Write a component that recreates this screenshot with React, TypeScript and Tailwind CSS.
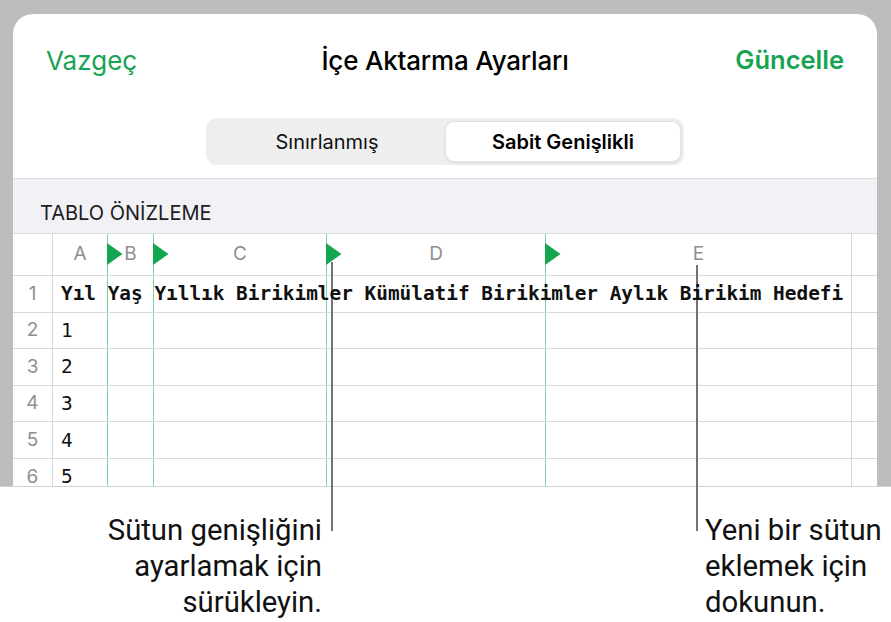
import React from 'react'

// ── Data ───────────────────────────────────────────────────────────────────────

const columns = [
  { key: 'A', w: 'w-[54px]' },
  { key: 'B', w: 'w-[46px]' },
  { key: 'C', w: 'w-[173px]' },
  { key: 'D', w: 'w-[219px]' },
  { key: 'E', w: 'w-[307px]' },
]

const bodyRows = ['1', '2', '3', '4', '5']

const headerText = 'Yıl Yaş Yıllık Birikimler Kümülatif Birikimler Aylık Birikim Hedefi'

// ── Bits ───────────────────────────────────────────────────────────────────────

function Marker() {
  return (
    <svg width="16" height="22" viewBox="0 0 16 22" className="absolute left-[-1px] top-[9px]">
      <path d="M0 0L15.5 11L0 22Z" fill="#14a64f" />
    </svg>
  )
}

function RowCells({ children, first }: { children?: React.ReactNode; first?: boolean }) {
  return (
    <>
      <div className={`w-[54px] relative z-10 flex items-center pl-[8px] font-['DejaVu_Sans_Mono',monospace] text-[19.4px] text-[#111] whitespace-nowrap ${first ? 'font-bold' : ''}`}>
        {children}
      </div>
      <div className="w-[46px] border-l border-l-[#7fd4a3]" />
      <div className="w-[173px] border-l border-l-[#7fd4a3]" />
      <div className="w-[219px] border-l border-l-[#7fd4a3]" />
      <div className="w-[307px] border-l border-l-[#7fd4a3] border-r border-r-[#d6d6d6]" />
    </>
  )
}

// ── Component ──────────────────────────────────────────────────────────────────

export default function App() {
  return (
    <div className="w-[891px] h-[622px] bg-white relative overflow-hidden font-['Inter',sans-serif]">
      {/* ── Screenshot frame ── */}
      <div className="h-[487px] bg-[#bcbebb] pt-[14px] pl-[13px] pr-[14px] border-b border-[#d0d0d0]">
        <div className="h-full bg-white rounded-t-[20px] overflow-hidden flex flex-col">
          {/* Header */}
          <div className="h-[92px] shrink-0 flex items-center px-[33px]">
            <div className="flex-1 text-[26px] text-[#17a452]">Vazgeç</div>
            <div className="text-[26px] font-medium text-black tracking-[-0.2px]">İçe Aktarma Ayarları</div>
            <div className="flex-1 text-right text-[25.5px] font-semibold text-[#17a452]">Güncelle</div>
          </div>

          {/* Segmented control */}
          <div className="mt-[12px] mx-auto w-[478px] h-[47px] shrink-0 rounded-[11px] bg-[#eeeeef] p-[3px] grid grid-cols-2">
            <div className="flex items-center justify-center text-[20px] text-[#111]">Sınırlanmış</div>
            <div className="flex items-center justify-center rounded-[9px] bg-white border border-[#e2e2e4] shadow-[0_1px_3px_rgba(0,0,0,0.08)] text-[20px] font-semibold text-black">
              Sabit Genişlikli
            </div>
          </div>

          {/* Section header */}
          <div className="mt-[13px] h-[56px] shrink-0 border-t border-b border-[#dcdce0] bg-[#f1f1f6] pl-[27px] pt-[19px] text-[20px] text-[#1c1c1e]">
            TABLO ÖNİZLEME
          </div>

          {/* Table */}
          <div className="flex flex-col">
            <div className="h-[42px] flex border-b border-[#d9d9d9]">
              <div className="w-[40px] border-r border-[#d9d9d9]" />
              {columns.map((c, i) => (
                <div
                  key={c.key}
                  className={`${c.w} relative flex items-center justify-center text-[19px] text-[#8e8e93] ${i > 0 ? 'border-l border-l-[#7fd4a3]' : ''} ${i === columns.length - 1 ? 'border-r border-r-[#d6d6d6]' : ''}`}
                >
                  {i > 0 && <Marker />}
                  {c.key}
                </div>
              ))}
            </div>

            <div className="h-[36.6px] flex border-b border-[#d9d9d9]">
              <div className="w-[40px] border-r border-[#d9d9d9] flex items-center justify-center text-[19px] text-[#8e8e93]">1</div>
              <RowCells first>{headerText}</RowCells>
            </div>

            {bodyRows.map((v, i) => (
              <div key={v} className="h-[36.6px] shrink-0 flex border-b border-[#d9d9d9]">
                <div className="w-[40px] border-r border-[#d9d9d9] flex items-center justify-center text-[19px] text-[#8e8e93]">{i + 2}</div>
                <RowCells>{v}</RowCells>
              </div>
            ))}
          </div>
        </div>
      </div>

      {/* ── Callout leader lines ── */}
      <div className="absolute left-[331px] top-[262px] w-[2px] h-[269px] bg-[#747474]" />
      <div className="absolute left-[696px] top-[265px] w-[2px] h-[266px] bg-[#747474]" />

      {/* ── Callout texts ── */}
      <div className="flex pt-[25px] font-['Roboto',sans-serif] text-[29.3px] leading-[36px] text-[#111]">
        <div className="w-[322px] text-right">
          Sütun genişliğini<br />ayarlamak için<br />sürükleyin.
        </div>
        <div className="ml-[383px]">
          Yeni bir sütun<br />eklemek için<br />dokunun.
        </div>
      </div>
    </div>
  )
}
